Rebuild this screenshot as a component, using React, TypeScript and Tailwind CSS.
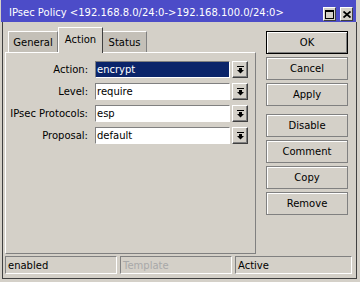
import React from "react";

const font = { fontFamily: '"DejaVu Sans", "Liberation Sans", sans-serif' };

function DropArrow() {
  return (
    <svg width="7" height="8" viewBox="0 0 7 8" className="block">
      <rect x="0" y="0" width="7" height="1" fill="#000" />
      <rect x="2" y="2" width="3" height="2" fill="#000" />
      <path d="M0 4h7L3.5 7.5z" fill="#000" />
    </svg>
  );
}

function Field({ label, value, selected }: { label: string; value: string; selected?: boolean }) {
  return (
    <div className="flex h-[17px] items-center">
      <div className="w-[84px] pr-[2px] text-right text-[10px] text-black">{label}</div>
      <div className="ml-[5px] flex h-[17px] w-[135px] border-t border-l border-b border-r border-t-[#808080] border-l-[#808080] border-b-white border-r-white">
        <div
          className={`flex h-full w-full items-center pl-[1px] text-[10px] ${
            selected ? "bg-[#0a246a] text-white" : "bg-white text-black"
          }`}
        >
          {value}
        </div>
      </div>
      <div className="ml-[2px] flex h-[17px] w-[16px] items-center justify-center border border-t-white border-l-white border-b-[#404040] border-r-[#404040] bg-[#d4d0c8] shadow-[inset_-1px_-1px_0_#808080]">
        <DropArrow />
      </div>
    </div>
  );
}

function Btn({ label, primary }: { label: string; primary?: boolean }) {
  return (
    <div
      className={`flex h-[23px] w-[82px] items-center justify-center text-[10px] text-black ${
        primary
          ? "border border-black shadow-[inset_1px_1px_0_#fff,inset_-1px_-1px_0_#808080]"
          : "border border-[#808080] shadow-[inset_1px_1px_0_#fff]"
      }`}
    >
      {label}
    </div>
  );
}

function StatusCell({ text, w, dim }: { text: string; w: string; dim?: boolean }) {
  return (
    <div
      className={`flex h-[18px] items-center border border-t-[#808080] border-l-[#808080] border-b-white border-r-white pl-[2px] text-[10px] ${w} ${
        dim ? "text-[#a8a8a8]" : "text-black"
      }`}
    >
      {text}
    </div>
  );
}

export default function App() {
  return (
    <div className="h-[282px] w-[360px] overflow-hidden bg-[#d4d0c8]" style={font}>
      {/* title bar */}
      <div className="ml-[1px] flex h-[22px] w-[355px] items-end justify-between bg-[#4c4cc8] pb-[1px] pl-[8px] pr-[3px]">
        <span className="mb-[1px] text-[10px] text-white">
          IPsec Policy &lt;192.168.8.0/24:0-&gt;192.168.100.0/24:0&gt;
        </span>
        <div className="flex gap-[4px]">
          <div className="flex h-[14px] w-[13px] items-center justify-center border border-t-white border-l-white border-b-[#404040] border-r-[#404040] bg-[#d4d0c8]">
            <div className="h-[9px] w-[9px] border border-t-2 border-black" />
          </div>
          <div className="flex h-[14px] w-[13px] items-center justify-center border border-t-white border-l-white border-b-[#404040] border-r-[#404040] bg-[#d4d0c8]">
            <svg width="8" height="7" viewBox="0 0 8 7">
              <path d="M0.5 0.5L7.5 6.5M7.5 0.5L0.5 6.5" stroke="#000" strokeWidth="1.8" />
            </svg>
          </div>
        </div>
      </div>

      {/* window body */}
      <div className="ml-[2px] h-[257px] w-[355px] border-x border-b border-[#404040] pt-[5px]">
        <div className="flex">
          <div className="ml-[2px] w-[251px]">
            {/* tabs */}
            <div className="relative z-10 flex h-[25px] items-end pl-[3px]">
              <div className="flex h-[21px] w-[50px] items-center justify-center border-t border-l border-r border-t-white border-l-white border-r-[#808080] bg-[#c4c0b8] text-[10px] text-black">
                General
              </div>
              <div className="-mb-[1px] flex h-[26px] w-[45px] items-center justify-center border-t border-l border-r border-t-white border-l-white border-r-[#404040] bg-[#d4d0c8] pb-[2px] text-[10px] text-black">
                Action
              </div>
              <div className="flex h-[21px] w-[44px] items-center justify-center border-t border-r border-t-white border-r-[#808080] bg-[#c4c0b8] text-[10px] text-black">
                Status
              </div>
            </div>
            {/* panel */}
            <div className="flex h-[202px] flex-col gap-[5px] border border-t-white border-l-white border-b-[#808080] border-r-[#808080] pt-[8px]">
              <Field label="Action:" value="encrypt" selected />
              <Field label="Level:" value="require" />
              <Field label="IPsec Protocols:" value="esp" />
              <Field label="Proposal:" value="default" />
            </div>
          </div>

          {/* buttons */}
          <div className="ml-[10px] mt-[4px] flex w-[82px] flex-col">
            <div className="flex flex-col gap-[3px]">
              <Btn label="OK" primary />
              <Btn label="Cancel" />
              <Btn label="Apply" />
            </div>
            <div className="mt-[8px] flex flex-col gap-[3px]">
              <Btn label="Disable" />
              <Btn label="Comment" />
              <Btn label="Copy" />
              <Btn label="Remove" />
            </div>
          </div>
        </div>

        {/* status bar */}
        <div className="ml-[2px] mt-[2px] flex gap-[3px]">
          <StatusCell text="enabled" w="w-[112px]" />
          <StatusCell text="Template" w="w-[112px]" dim />
          <StatusCell text="Active" w="w-[117px]" />
        </div>
      </div>
    </div>
  );
}
